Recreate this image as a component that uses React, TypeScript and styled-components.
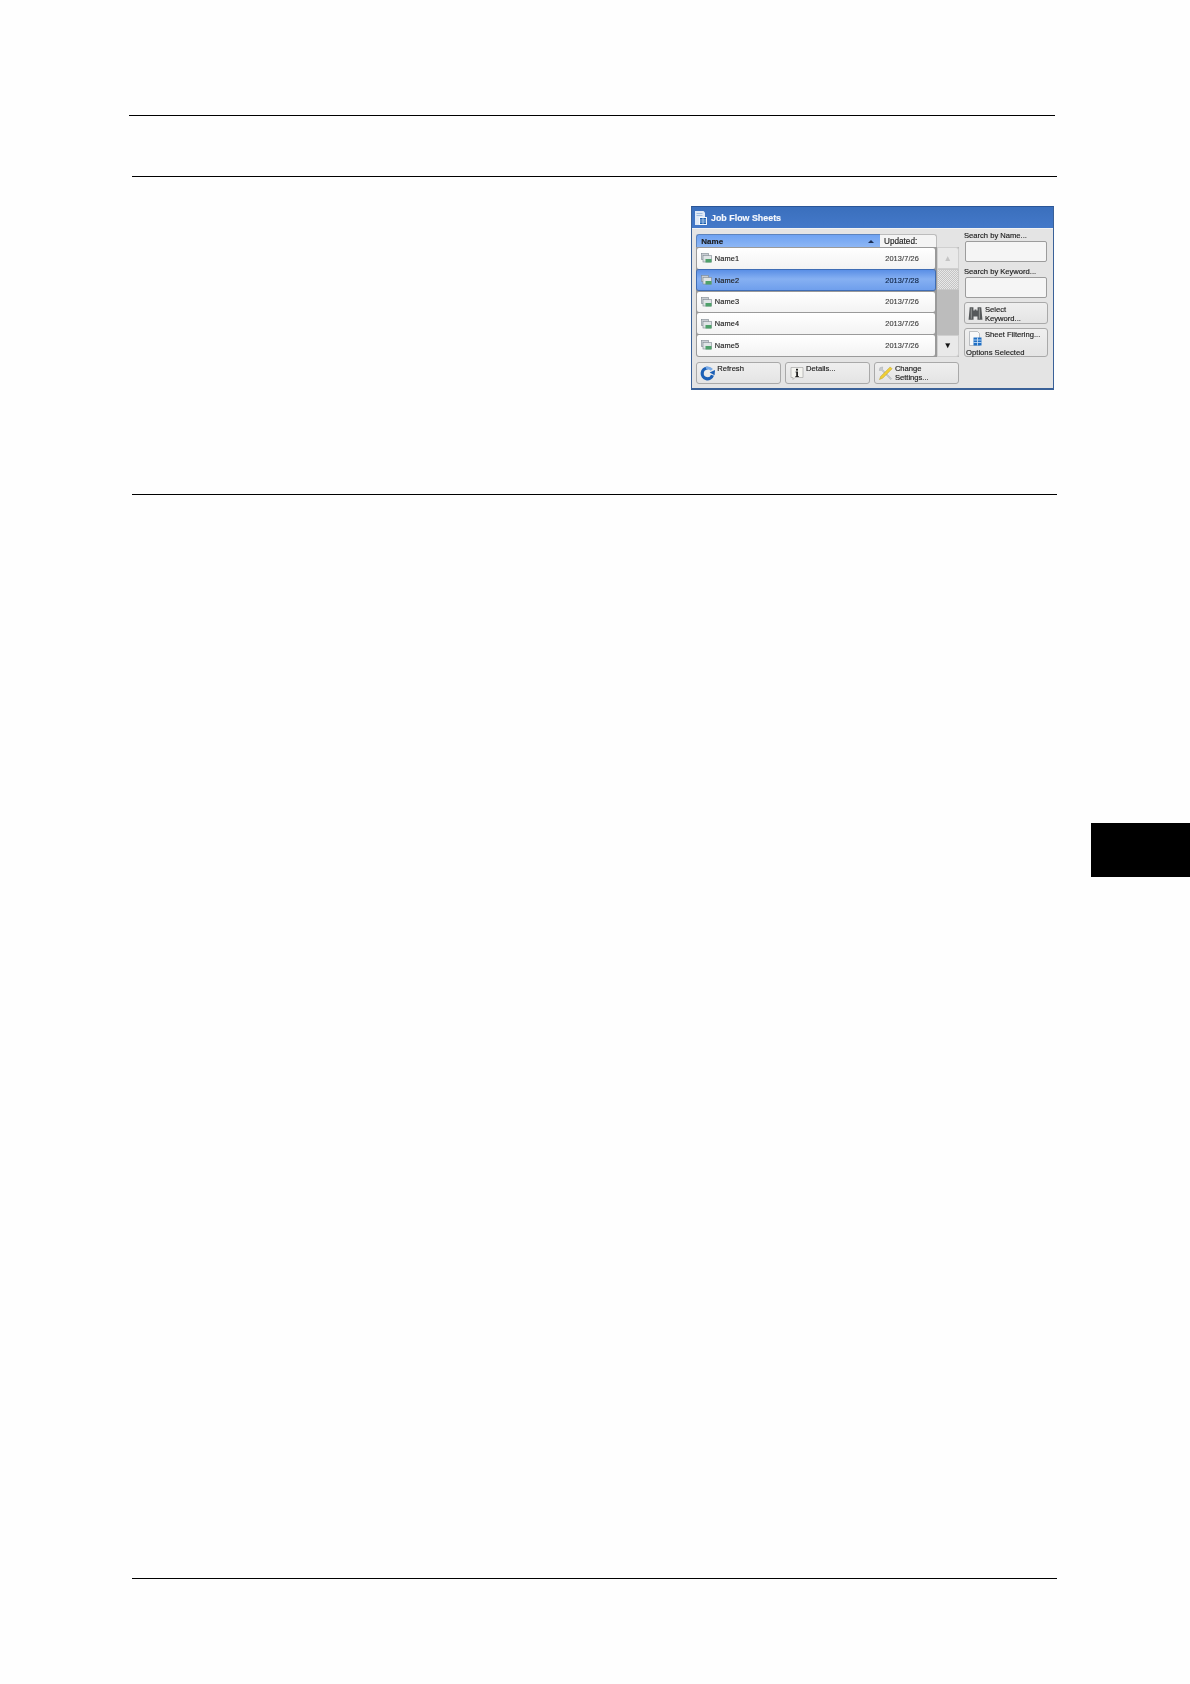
import React from 'react';
import styled, { createGlobalStyle } from 'styled-components';

const GlobalStyle = createGlobalStyle`
  html, body {
    margin: 0;
    padding: 0;
    background: #fefefe;
  }
`;

// page: rules and the chapter tab sit in plain flow
const Page = styled.div`
  width: 1190px;
  height: 1684px;
  display: flex;
  flex-direction: column;
  padding-top: 115px;
  box-sizing: border-box;
  overflow: hidden;
  background: #fefefe;
`;

const HeaderRule = styled.div`
  width: 926px;
  height: 1px;
  margin-left: 129px;
  background: #000;
`;

const Section = styled.section`
  width: 925px;
  height: 319px;
  margin: 60px 0 0 132px;
  padding: 29px 3px 0 0;
  box-sizing: border-box;
  display: flex;
  justify-content: flex-end;
  align-items: flex-start;
  border-top: 1px solid #000;
  border-bottom: 1px solid #000;
`;

const ChapterTab = styled.div`
  width: 99px;
  height: 54px;
  margin: 328px 0 0 1091px;
  background: #000;
`;

const FooterRule = styled.div`
  width: 925px;
  height: 1px;
  margin: 701px 0 0 132px;
  background: #000;
`;

// device screen
const Panel = styled.div`
  width: 363px;
  height: 184px;
  box-sizing: border-box;
  display: flex;
  flex-direction: column;
  border: 1px solid #3a6198;
  border-top-color: #2a5596;
  border-bottom-width: 2px;
  background: #e4e4e4;
  font-family: 'Liberation Sans', Arial, sans-serif;
  color: #1c1c1c;
  -webkit-text-stroke: 0.15px currentColor;
  filter: blur(0.4px);
`;

const TitleBar = styled.div`
  height: 21px;
  flex: none;
  display: flex;
  align-items: center;
  gap: 4px;
  padding-left: 3px;
  background: linear-gradient(#3a6fbd, #4479c9);
  color: #f4f7fc;
  font-size: 8.9px;
  font-weight: 700;
`;

const Body = styled.div`
  flex: 1;
  display: flex;
  gap: 5.3px;
  padding: 5.3px 5px 0 4.3px;
  border-top: 1px solid #f2f2f2;
`;

const LeftColumn = styled.div`
  width: 262.4px;
  flex: none;
  display: flex;
  flex-direction: column;
`;

const HeaderRow = styled.div`
  width: 240.4px;
  height: 13px;
  display: flex;
  font-size: 8px;
`;

const NameHead = styled.div`
  flex: 1;
  display: flex;
  align-items: center;
  justify-content: space-between;
  padding: 0 6px 0 4px;
  border: 1px solid #5d84bd;
  border-bottom: none;
  border-right: none;
  border-radius: 3px 0 0 0;
  background: linear-gradient(#6ea2f2, #8db6f4);
  font-weight: 700;
`;

const SortArrow = styled.span`
  width: 0;
  height: 0;
  border-left: 3px solid transparent;
  border-right: 3px solid transparent;
  border-bottom: 3px solid #1c2f55;
`;

const UpdatedHead = styled.div`
  width: 56.7px;
  display: flex;
  align-items: center;
  padding-left: 4px;
  box-sizing: border-box;
  border: 1px solid #bcbcbc;
  border-bottom: none;
  border-left: none;
  border-radius: 0 3px 0 0;
  background: #f4f4f4;
  font-size: 8.2px;
`;

const ListArea = styled.div`
  display: flex;
  height: 109.3px;
`;

const Rows = styled.div`
  width: 240.4px;
  flex: none;
  box-sizing: border-box;
  display: flex;
  flex-direction: column;
  justify-content: space-between;
  padding: 1px 1.5px 1px 1px;
  background: #9a9a9a;
  border-radius: 0 0 0 3px;
`;

const Row = styled.div<{ $selected?: boolean }>`
  height: 20.4px;
  display: flex;
  align-items: center;
  box-sizing: border-box;
  padding-left: 3.5px;
  border-radius: 2px;
  font-size: 7.4px;
  letter-spacing: 0.1px;
  background: ${(props) =>
    props.$selected
      ? 'linear-gradient(#5a8fe6, #86b0f2 45%, #6f9fec)'
      : 'linear-gradient(#ffffff, #f3f3f3)'};
  ${(props) => props.$selected && 'box-shadow: 0 0 0 1px #3f6db5;'}
`;

const RowName = styled.span`
  margin-left: 3px;
  flex: 1;
`;

const RowDate = styled.span<{ $selected?: boolean }>`
  width: 50px;
  font-size: 7.4px;
  color: ${(props) => (props.$selected ? '#0f2445' : '#444')};
`;

const ScrollBar = styled.div`
  width: 22px;
  flex: none;
  display: flex;
  flex-direction: column;
  background: #bcbcbc;
`;

const ScrollButton = styled.div<{ $down?: boolean }>`
  height: 21.5px;
  flex: none;
  box-sizing: border-box;
  display: flex;
  align-items: center;
  justify-content: center;
  border: 1px solid #cfcfcf;
  border-radius: ${(props) => (props.$down ? '0 0 3px 0' : '0 3px 0 0')};
  background: #e9e9e9;
  color: ${(props) => (props.$down ? '#111' : '#c4c4c4')};
  font-size: 8px;
`;

const ScrollThumb = styled.div`
  height: 21px;
  flex: none;
  border: 1px solid #c8c8c8;
  box-sizing: border-box;
  background-color: #d6d6d6;
  background-image: repeating-conic-gradient(#c4c4c4 0 25%, #e8e8e8 0 50%);
  background-size: 2px 2px;
`;

const ScrollTrack = styled.div`
  flex: 1;
`;

const ButtonRow = styled.div`
  display: flex;
  gap: 4px;
  margin-top: 5.7px;
`;

const PanelButton = styled.div<{ $height?: number }>`
  flex: 1;
  height: ${(props) => props.$height ?? 21.5}px;
  box-sizing: border-box;
  display: flex;
  align-items: flex-start;
  border: 1px solid #a9a9a9;
  border-radius: 3px;
  background: linear-gradient(#efefef, #e4e4e4);
  padding-left: 3px;
  font-size: 7.6px;
  line-height: 9.3px;
`;

const IconSlot = styled.div<{ $top?: boolean }>`
  width: 15px;
  height: ${(props) => (props.$top ? 'auto' : '100%')};
  flex: none;
  display: flex;
  align-items: center;
  justify-content: center;
  margin-right: 2px;
  padding-top: ${(props) => (props.$top ? '2px' : '0')};
`;

const ButtonLabel = styled.div<{ $drop?: boolean }>`
  padding-top: ${(props) => (props.$drop ? '1.5px' : '0.5px')};
`;

const RightColumn = styled.div`
  flex: 1;
  margin-top: -4px;
  display: flex;
  flex-direction: column;
`;

const SearchLabel = styled.div`
  height: 11px;
  line-height: 11px;
  font-size: 7.6px;
  white-space: nowrap;
`;

const SearchBox = styled.div`
  height: 21px;
  margin: 0 1px 4px 1px;
  box-sizing: border-box;
  border: 1.5px solid #9c9c9c;
  border-radius: 2px;
  background: #f5f5f5;
`;

const SideButton = styled(PanelButton)`
  flex: none;
`;

const FilterButton = styled(SideButton)`
  position: relative;
  margin-top: 4px;
`;

const OptionsLine = styled.div`
  position: absolute;
  left: 1px;
  bottom: -1px;
  font-size: 7.7px;
  white-space: nowrap;
`;

const TitleIcon = () => (
  <svg width="12" height="14" viewBox="0 0 12 14">
    <path d="M0 0h8.500L10 1.500V14H0z" fill="#dfe9f6" />
    <path d="M1.500 2.500h6M1.500 4.500h6" stroke="#8fb0da" strokeWidth="0.8" />
    <rect x="4" y="6" width="8" height="8" fill="#f2f6fb" />
    <rect x="5" y="7" width="6" height="6" fill="#1c5fae" />
    <path d="M5 9h6M5 11h6M8 7v6" stroke="#cfe4fa" strokeWidth="0.7" />
  </svg>
);

const FilterIcon = () => (
  <svg width="13" height="15" viewBox="0 0 13 15">
    <path d="M.5.500h8l2 2v12H.500z" fill="#f7f8f9" stroke="#a4a8ac" strokeWidth="0.7" />
    <rect x="4.500" y="6.500" width="8" height="8" fill="#1f6fc4" />
    <path d="M4.500 9h8M4.500 11.500h8M8.500 6.500v8" stroke="#cfe4fa" strokeWidth="0.8" />
  </svg>
);

const RowIcon = () => (
  <svg width="11" height="10" viewBox="0 0 11 10">
    <rect x="0.5" y="0.5" width="7" height="6" fill="#c9ced3" stroke="#7d8790" strokeWidth="0.6" />
    <rect x="2" y="2.500" width="8.500" height="6.500" fill="#dfe4e6" stroke="#7d8790" strokeWidth="0.6" />
    <rect x="4.500" y="6" width="6" height="3.500" fill="#4fa06a" />
  </svg>
);

const RefreshIcon = () => (
  <svg width="15" height="15" viewBox="0 0 15 15">
    <path d="M7.500 2.200a5.300 5.300 0 1 0 5 7" fill="none" stroke="#1b5fb6" strokeWidth="3.200" />
    <path d="M6 2.300a5.300 5.300 0 0 1 5.800 1.600" fill="none" stroke="#79abe8" strokeWidth="3" />
    <path d="M15 4 9.600 6.600l5 2.600z" fill="#1b5fb6" />
  </svg>
);

const InfoIcon = () => (
  <svg width="14" height="14" viewBox="0 0 14 14">
    <path d="M1 1.500h12v10H5l-2 2v-2H1z" fill="#f4f4f0" stroke="#a8a8a8" strokeWidth="0.7" />
    <rect x="6" y="2.800" width="2" height="1.800" fill="#222" />
    <path d="M5.600 5.600H8v4.400h.8v.9H5.400V10h.8V6.500h-.6z" fill="#222" />
  </svg>
);

const ToolsIcon = () => (
  <svg width="18" height="18" viewBox="0 0 16 16">
    <path d="M2 2.500l3-1-.4 2.400L14.500 14l-1 1L3.600 5 1.400 5.400z" fill="#c8ccd0" stroke="#94989c" strokeWidth="0.4" />
    <path d="M13 1.500l2 2L5 13.500l-3.500 1.500L3 11.500z" fill="#f0cf35" stroke="#b39a2a" strokeWidth="0.5" />
  </svg>
);

const BinocularsIcon = () => (
  <svg width="15" height="15" viewBox="0 0 13 13">
    <path d="M1.500 1h3.200v3H5.700V3h1.600v1h1V1h3.200l1 11H8.200V9H4.800v3H.5z" fill="#55585a" />
    <path d="M2.400 2h1v9h-1zM9.400 2h1v9h-1z" fill="#8b8e8d" />
  </svg>
);

const rows = [
  { name: 'Name1', date: '2013/7/26' },
  { name: 'Name2', date: '2013/7/28', selected: true },
  { name: 'Name3', date: '2013/7/26' },
  { name: 'Name4', date: '2013/7/26' },
  { name: 'Name5', date: '2013/7/26' },
];

const App = () => {
  return (
    <Page>
      <GlobalStyle />
      <HeaderRule />
      <Section>
        <Panel>
          <TitleBar>
            <TitleIcon />
            Job Flow Sheets
          </TitleBar>
          <Body>
            <LeftColumn>
              <HeaderRow>
                <NameHead>
                  Name
                  <SortArrow />
                </NameHead>
                <UpdatedHead>Updated:</UpdatedHead>
              </HeaderRow>
              <ListArea>
                <Rows>
                  {rows.map((row) => (
                    <Row key={row.name} $selected={row.selected}>
                      <RowIcon />
                      <RowName>{row.name}</RowName>
                      <RowDate $selected={row.selected}>{row.date}</RowDate>
                    </Row>
                  ))}
                </Rows>
                <ScrollBar>
                  <ScrollButton>▲</ScrollButton>
                  <ScrollThumb />
                  <ScrollTrack />
                  <ScrollButton $down>▼</ScrollButton>
                </ScrollBar>
              </ListArea>
              <ButtonRow>
                <PanelButton>
                  <IconSlot><RefreshIcon /></IconSlot>
                  <ButtonLabel>Refresh</ButtonLabel>
                </PanelButton>
                <PanelButton>
                  <IconSlot><InfoIcon /></IconSlot>
                  <ButtonLabel>Details...</ButtonLabel>
                </PanelButton>
                <PanelButton>
                  <IconSlot><ToolsIcon /></IconSlot>
                  <ButtonLabel>Change<br />Settings...</ButtonLabel>
                </PanelButton>
              </ButtonRow>
            </LeftColumn>
            <RightColumn>
              <SearchLabel>Search by Name...</SearchLabel>
              <SearchBox />
              <SearchLabel>Search by Keyword...</SearchLabel>
              <SearchBox />
              <SideButton $height={22}>
                <IconSlot><BinocularsIcon /></IconSlot>
                <ButtonLabel $drop>Select<br />Keyword...</ButtonLabel>
              </SideButton>
              <FilterButton $height={29}>
                <IconSlot $top><FilterIcon /></IconSlot>
                <ButtonLabel>Sheet Filtering...</ButtonLabel>
                <OptionsLine>Options Selected</OptionsLine>
              </FilterButton>
            </RightColumn>
          </Body>
        </Panel>
      </Section>
      <ChapterTab />
      <FooterRule />
    </Page>
  );
};

export default App;
